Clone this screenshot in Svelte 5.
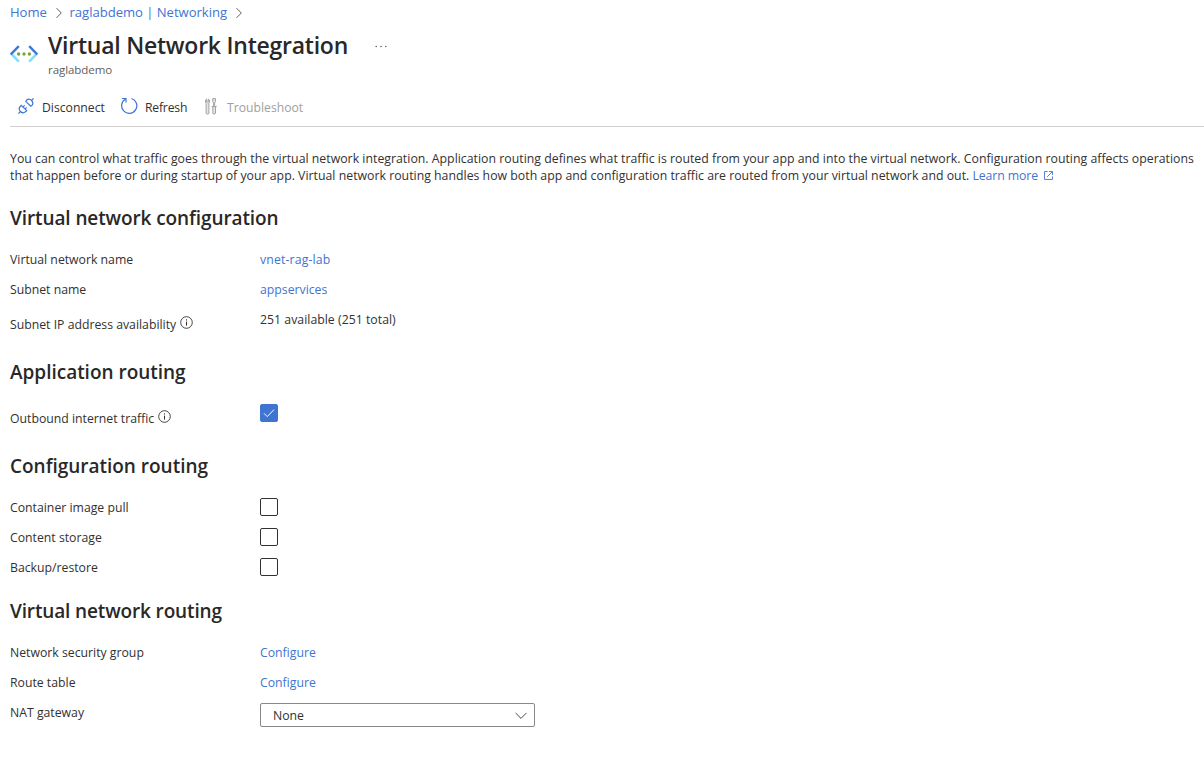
<script>
  const sections = [
    {
      title: 'Virtual network configuration',
      spacing: -0.1,
      rows: [
        { label: 'Virtual network name', link: 'vnet-rag-lab', spacing: 0.15 },
        { label: 'Subnet name', link: 'appservices' },
        { label: 'Subnet IP address availability', info: true, text: '251 available (251 total)' }
      ]
    },
    {
      title: 'Application routing',
      spacing: -0.02,
      rows: [{ label: 'Outbound internet traffic', info: true, check: true, checked: true }]
    },
    {
      title: 'Configuration routing',
      spacing: -0.02,
      rows: [
        { label: 'Container image pull', check: true },
        { label: 'Content storage', check: true },
        { label: 'Backup/restore', check: true }
      ]
    },
    {
      title: 'Virtual network routing',
      spacing: -0.14,
      rows: [
        { label: 'Network security group', link: 'Configure' },
        { label: 'Route table', link: 'Configure' },
        { label: 'NAT gateway', select: 'None' }
      ]
    }
  ];
</script>

<main>
  <nav class="crumbs">
    <a class="home" href="#home">Home</a>
    <svg width="8" height="12" viewBox="0 0 8 12"><path d="M1.5 1.2 6.3 6 1.5 10.8" /></svg>
    <a class="net" href="#networking">raglabdemo | Networking</a>
    <svg width="8" height="12" viewBox="0 0 8 12"><path d="M1.5 1.2 6.3 6 1.5 10.8" /></svg>
  </nav>

  <header>
    <svg class="vnet" width="28" height="18" viewBox="0 0 28 18" fill="none" stroke-width="2.4">
      <path d="M.6 8.200 8.800 16.600M27.400 8.200 19.200 16.600" stroke="#7fdcfb" />
      <path d="M8.800 1.200.8 9.400M19.200 1.200 27.200 9.400" stroke="#3f78d4" />
      <circle cx="8.6" cy="9" r="1.7" fill="#76a63a" />
      <circle cx="14" cy="9" r="1.7" fill="#76a63a" />
      <circle cx="19.4" cy="9" r="1.7" fill="#76a63a" />
    </svg>
    <div class="heading">
      <h1>Virtual Network Integration</h1>
      <p>raglabdemo</p>
    </div>
    <svg class="more" width="12" height="3" viewBox="0 0 12 3" fill="#605e5c">
      <circle cx="1.2" cy="1.5" r=".8" /><circle cx="6" cy="1.5" r=".8" /><circle cx="10.8" cy="1.5" r=".8" />
    </svg>
  </header>

  <div class="toolbar">
    <button class="disconnect">
      <svg width="16" height="16" viewBox="0 0 16 16" fill="none" stroke="#3f74d1" stroke-width="1.15">
        <path d="M.4 15.600 2.500 13.500M13.500 2.500 15.600.4" />
        <path d="M3.300 7.300 8.700 12.700 7.500 13.700C5.900 15.200 3.900 14.900 2.500 13.500 1.100 12.100.8 10.100 2.200 8.500z" />
        <path d="M7.800 3.300 12.700 8.200 13.800 7.500C15.200 6 15 4 13.600 2.500 12.100 1 10.100.8 8.500 2.200z" />
        <path d="M5 9 6.700 7.300M7 11 8.700 9.300" />
      </svg>
      <span>Disconnect</span>
    </button>
    <button class="refresh">
      <svg width="18" height="18" viewBox="0 0 18 18" fill="none" stroke="#3f74d1" stroke-width="1.2">
        <path d="M11.500 1.500A7.600 7.600 0 1 1 5.200 2.300M1.900 1.500H6V5.600" />
      </svg>
      <span>Refresh</span>
    </button>
    <button class="troubleshoot" disabled>
      <svg width="12" height="17" viewBox="0 0 12 17" fill="#e6e5e4" stroke="#a5a3a1" stroke-width="1">
        <path d="M1.700 1v3h1.600V1c1.700.8 1.800 3.200.6 4.200V15c0 1.500-2.800 1.500-2.800 0V5.200C0 4 .2 1.800 1.700 1z" />
        <path d="M7.700.6h2.800v3L9.600 5v3.600H8.600V5L7.700 3.600z" />
        <path d="M6.500 8.600h5.200M7.800 8.600V15c0 1.500 2.700 1.500 2.700 0V8.600" />
      </svg>
      <span>Troubleshoot</span>
    </button>
  </div>

  <p class="intro">
    <span class="l1">You can control what traffic goes through the virtual network integration. Application routing defines what traffic is routed from your app and into the virtual network. Configuration routing affects operations</span><br />
    <span class="l2">that happen before or during startup of your app. Virtual network routing handles how both app and configuration traffic are routed from your virtual network and out.</span>
    <a class="learn" href="#learn">Learn more</a><svg class="ext" width="9" height="9" viewBox="0 0 10 10" fill="none" stroke="#3f74d1">
      <path d="M4 .6H.6V9.400H9.400V6M5.500.6H9.400V4.500M9.200.8 3.500 6.500" />
    </svg>
  </p>

  {#each sections as section}
    <section>
      <h2 style="letter-spacing: {section.spacing}px">{section.title}</h2>
      {#each section.rows as row}
        <div class="row" class:info-row={row.info}>
          <div class="label" class:with-info={row.info}>
            <span>{row.label}</span>
            {#if row.info}
              <svg width="13" height="13" viewBox="0 0 13 13" fill="none" stroke="#323130">
                <circle cx="6.5" cy="6.5" r="5.8" stroke-width=".9" />
                <path d="M6.500 5.600v4M6.500 3.300v1.200" />
              </svg>
            {/if}
          </div>
          <div class="value">
            {#if row.link}
              <a href="#{row.link}" style="letter-spacing: {row.spacing ?? 0}px">{row.link}</a>
            {:else if row.text}
              <span class="text">{row.text}</span>
            {:else if row.check}
              <span class="box" class:checked={row.checked} role="checkbox" tabindex="0" aria-checked={!!row.checked} aria-label={row.label}>
                {#if row.checked}
                  <svg width="12" height="10" viewBox="0 0 12 10" fill="none" stroke="#fff"><path d="M1 5.300 4.300 8.600 11 1.600" /></svg>
                {/if}
              </span>
            {:else}
              <div class="select">
                <span>{row.select}</span>
                <svg width="12" height="8" viewBox="0 0 12 8" fill="none" stroke="#484644"><path d="M.6 1 6 6.400 11.400 1" /></svg>
              </div>
            {/if}
          </div>
        </div>
      {/each}
    </section>
  {/each}
</main>

<style>
  :global(body) { background: #fff; }
  main {
    box-sizing: border-box;
    height: 764px;
    padding-left: 10px;
    overflow: hidden;
    font: 12.25px/18px 'Open Sans', sans-serif;
    color: #323130;
  }
  a { color: #3f74d1; text-decoration: none; }
  h1, h2, p { margin: 0; }
  svg { display: block; flex: none; }
  .crumbs { display: flex; align-items: center; height: 24px; margin-bottom: 1px; font-size: 13.1px; }
  .crumbs svg { fill: none; stroke: #605e5c; stroke-width: 1; margin: 2px 7px 0 8px; }
  .home { width: 36.5px; letter-spacing: -0.05px; }
  .net { width: 158px; white-space: nowrap; letter-spacing: -0.03px; }
  .crumbs svg:last-child { margin-left: 7px; }
  header { display: flex; height: 62px; }
  .vnet { margin: 20px 10px 0 0; }
  .heading { width: 327px; }
  h1 { font-size: 23px; line-height: 32px; font-weight: 600; letter-spacing: -0.24px; color: #292827; margin: 4px 0 1px; white-space: nowrap; }
  header p { font-size: 11.5px; line-height: 16px; letter-spacing: -0.06px; color: #605e5c; }
  .more { margin-top: 20px; }
  .toolbar { display: flex; height: 39px; border-bottom: 1px solid #d2d0ce; }
  button { display: flex; flex: none; align-items: center; box-sizing: border-box; height: 42px; padding: 0; border: 0; background: none; font: inherit; font-size: 12.2px; color: #323130; }
  button svg { margin-top: -4px; }
  .disconnect { padding-left: 8px; width: 110px; gap: 8px; }
  .refresh { gap: 7px; width: 88px; }
  .refresh span { letter-spacing: -0.2px; }
  .troubleshoot { gap: 9px; color: #a19f9d; }
  .troubleshoot svg { margin-left: -3px; }
  .troubleshoot span { padding-left: 1px; }
  .intro { font-size: 12.3px; line-height: 17px; padding-top: 23px; height: 46px; white-space: nowrap; }
  .l1 { letter-spacing: 0.01px; }
  .l2 { letter-spacing: 0.006px; }
  .learn { letter-spacing: -0.1px; }
  .ext { display: inline-block; margin-left: 6px; }
  section { padding-top: 5px; }
  h2 { font-size: 19px; line-height: 28px; font-weight: 600; color: #292827; margin-bottom: 19px; padding-top: 3px; }
  .row { display: flex; height: 30px; }
  .info-row { height: 39px; }
  .label { width: 250px; }
  .text { letter-spacing: 0.03px; }
  .with-info { display: flex; gap: 4px; }
  .with-info span { padding-top: 5px; }
  .with-info svg { margin-top: 4.5px; }
  .box { display: flex; align-items: center; justify-content: center; box-sizing: border-box; width: 18px; height: 18px; margin-top: -1px; border: 1px solid #323130; border-radius: 2px; }
  .checked { background: #3f74d1; border-color: #3f74d1; }
  .select { display: flex; align-items: center; justify-content: space-between; box-sizing: border-box; width: 275px; height: 24px; margin-top: -1px; border: 1px solid #8a8886; border-radius: 2px; padding: 0 7px 0 12px; }
  .select span { padding-top: 2px; }
  .select svg { margin-top: 2px; }
</style>
